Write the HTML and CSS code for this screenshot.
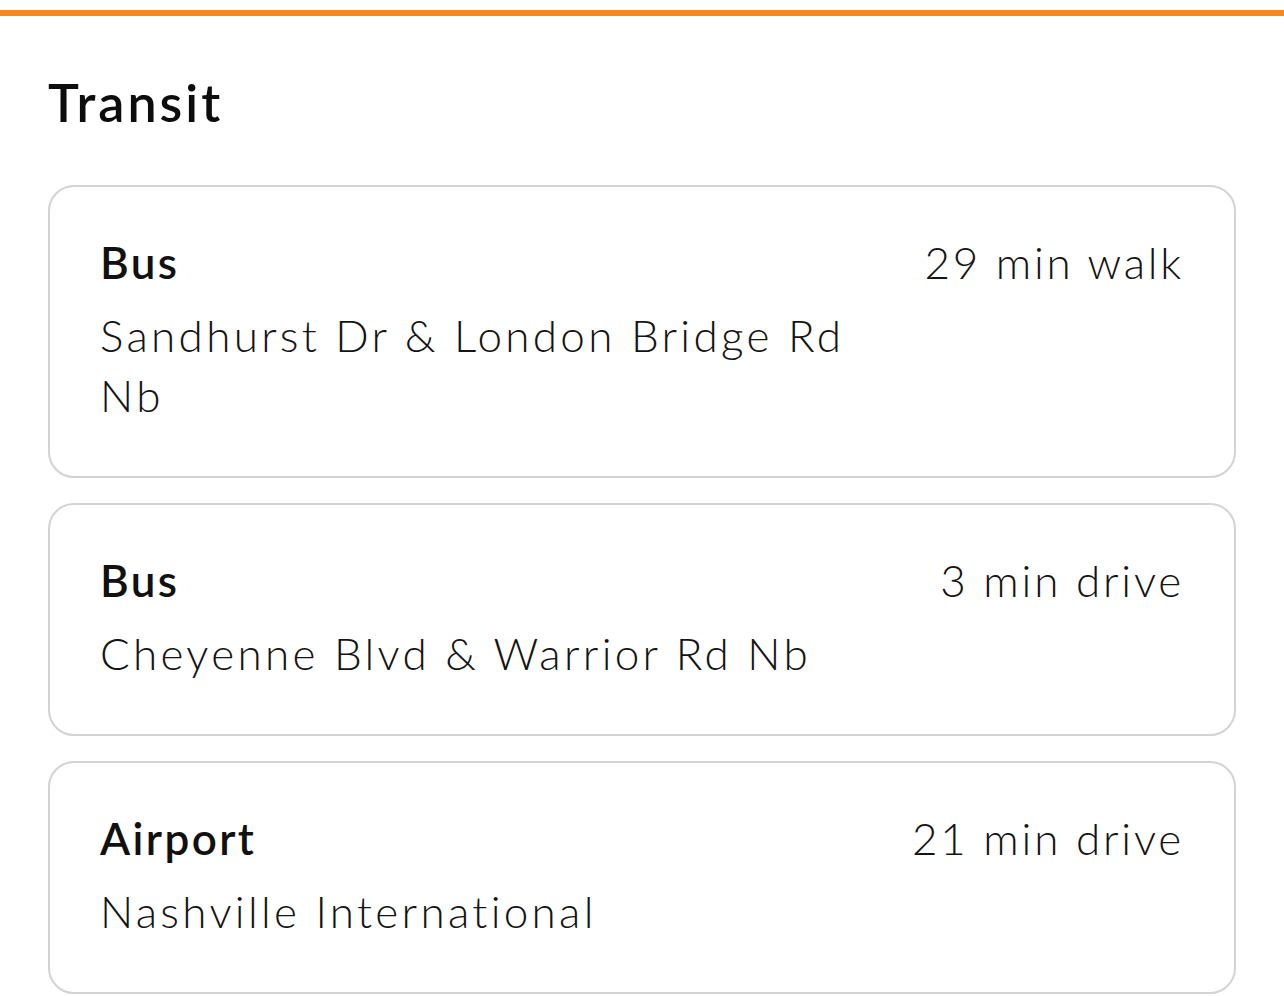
FILE: index.html
```html
<!DOCTYPE html>
<html lang="en">
<head>
<meta charset="utf-8">
<title>Transit</title>
<link rel="stylesheet" href="styles.css">
</head>
<body>
<div class="topbar"></div>
<main class="page">
  <h1 class="title">Transit</h1>
  <ul class="list">
    <li class="card">
      <div class="info">
        <div class="kind">Bus</div>
        <div class="place">Sandhurst Dr &amp; London Bridge Rd Nb</div>
      </div>
      <div class="time">29 min walk</div>
    </li>
    <li class="card">
      <div class="info">
        <div class="kind">Bus</div>
        <div class="place">Cheyenne Blvd &amp; Warrior Rd Nb</div>
      </div>
      <div class="time">3 min drive</div>
    </li>
    <li class="card">
      <div class="info">
        <div class="kind">Airport</div>
        <div class="place">Nashville International</div>
      </div>
      <div class="time">21 min drive</div>
    </li>
  </ul>
</main>
</body>
</html>
```

FILE: styles.css
```css
* { box-sizing: border-box; }
html, body {
  margin: 0;
  padding: 0;
  background: #ffffff;
}
body {
  font-family: "Lato", "Noto Sans", sans-serif;
  color: #111111;
}
.topbar {
  margin-top: 10px;
  height: 6px;
  background: #f28a1f;
}
.page {
  padding: 0 48px 0 48px;
}
.title {
  margin: 0;
  padding-top: 56px;
  font-size: 52px;
  line-height: 60px;
  font-weight: 600;
  letter-spacing: 3px;
  color: #0d0d0d;
}
.list {
  list-style: none;
  margin: 53px 0 0 0;
  padding: 0;
  display: flex;
  flex-direction: column;
  gap: 25px;
}
.card {
  display: flex;
  align-items: flex-start;
  border: 2px solid #d3d3d3;
  border-radius: 26px;
  padding: 45px 50px 51px 50px;
}
.info {
  flex: 1;
  min-width: 0;
  max-width: 790px;
}
.kind {
  font-size: 44px;
  line-height: 60px;
  font-weight: 600;
  letter-spacing: 2.4px;
}
.place {
  margin-top: 13px;
  font-size: 44px;
  line-height: 60px;
  font-weight: 300;
  letter-spacing: 3.3px;
  color: #141414;
}
.time {
  margin-left: auto;
  flex-shrink: 0;
  font-size: 44px;
  line-height: 60px;
  font-weight: 300;
  letter-spacing: 2.8px;
  color: #141414;
  text-align: right;
}
```
